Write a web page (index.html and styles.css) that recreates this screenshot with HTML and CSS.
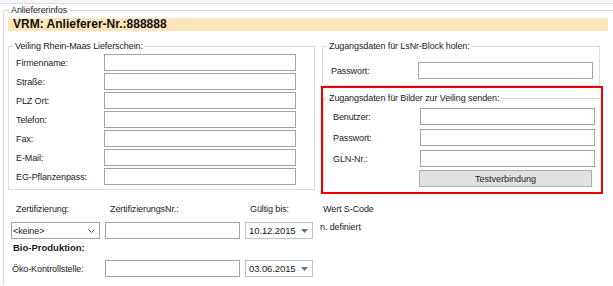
FILE: index.html
```html
<!DOCTYPE html>
<html>
<head>
    <title>Anliefererinfos</title>
    <link rel="stylesheet" href="styles.css">
</head>
<body>
    <div class="topbar"></div>
    <fieldset class="group outer">
        <legend>Anliefererinfos</legend>
        <div class="title-bar">VRM: Anlieferer-Nr.:888888</div>

        <div class="columns">
            <fieldset class="group supplier">
                <legend>Veiling Rhein-Maas Lieferschein:</legend>
                <div class="field"><label>Firmenname:</label><input type="text" class="text"></div>
                <div class="field"><label>Straße:</label><input type="text" class="text"></div>
                <div class="field"><label>PLZ Ort:</label><input type="text" class="text"></div>
                <div class="field"><label>Telefon:</label><input type="text" class="text"></div>
                <div class="field"><label>Fax:</label><input type="text" class="text"></div>
                <div class="field"><label>E-Mail:</label><input type="text" class="text"></div>
                <div class="field"><label>EG-Pflanzenpass:</label><input type="text" class="text"></div>
            </fieldset>

            <div class="access">
                <fieldset class="group lsnr">
                    <legend>Zugangsdaten für LsNr-Block holen:</legend>
                    <div class="field"><label>Passwort:</label><input type="password" class="text"></div>
                </fieldset>

                <div class="highlight">
                    <fieldset class="group images">
                        <legend>Zugangsdaten für Bilder zur Veiling senden:</legend>
                        <div class="field"><label>Benutzer:</label><input type="text" class="text"></div>
                        <div class="field"><label>Passwort:</label><input type="password" class="text"></div>
                        <div class="field"><label>GLN-Nr.:</label><input type="text" class="text"></div>
                        <button class="test-btn">Testverbindung</button>
                    </fieldset>
                </div>
            </div>
        </div>

        <div class="cert-row head">
            <span class="c1">Zertifizierung:</span>
            <span class="c2">ZertifizierungsNr.:</span>
            <span class="c3">Gültig bis:</span>
            <span class="c4">Wert S-Code</span>
        </div>
        <div class="cert-row values">
            <div class="combo">
                <span>&lt;keine&gt;</span>
                <svg width="7" height="4" viewBox="0 0 7 4"><polyline points="0.5,0.5 3.5,3.5 6.5,0.5" fill="none" stroke="#555" stroke-width="1"/></svg>
            </div>
            <input type="text" class="text short">
            <div class="date">
                <span>10.12.2015</span>
                <svg width="7" height="4" viewBox="0 0 7 4"><polygon points="0,0 7,0 3.5,4" fill="#5d7190"/></svg>
            </div>
            <span class="note">n. definiert</span>
        </div>
        <div class="cert-row bio">
            <span class="bio-title">Bio-Produktion:</span>
        </div>
        <div class="cert-row control">
            <span class="c0">Öko-Kontrollstelle:</span>
            <input type="text" class="text short">
            <div class="date">
                <span>03.06.2015</span>
                <svg width="7" height="4" viewBox="0 0 7 4"><polygon points="0,0 7,0 3.5,4" fill="#5d7190"/></svg>
            </div>
        </div>
    </fieldset>
</body>
</html>
```

FILE: styles.css
```css
body {
    margin: 0;
    background-color: white;
    font-family: "Liberation Sans", Arial, sans-serif;
    font-size: 9px;
    letter-spacing: -0.1px;
    color: #1a1a1a;
    overflow: hidden;
}
.topbar {
    height: 3px;
    border-bottom: 1px solid #d8dde3;
    background-color: #f4f5f7;
}
.group {
    margin: 0;
    padding: 0;
    min-width: 0;
    border: 1px solid #dcdcdc;
    box-sizing: border-box;
}
.group legend {
    padding: 0 2px;
    line-height: 11px;
    font-size: 9px;
}
.outer {
    margin: 1px 0 0 3px;
    padding: 0 0 8px 4px;
    border-right: none;
    border-bottom: none;
}
.outer > legend {
    margin-left: 1px;
}
.title-bar {
    margin: 2px 5px 0 0;
    height: 13px;
    line-height: 13px;
    padding-left: 5px;
    background-color: #fde4ba;
    font-size: 12px;
    font-weight: bold;
    letter-spacing: 0;
    color: #111;
}
.columns {
    display: flex;
    align-items: flex-start;
    margin-top: 10px;
}
.field {
    display: flex;
    align-items: center;
    height: 17px;
}
.field label {
    flex: none;
}
input.text {
    box-sizing: border-box;
    height: 17px;
    margin: 0;
    padding: 0 2px;
    border: 1px solid #a3a3a3;
    background-color: white;
    font: inherit;
    outline: none;
}
.supplier {
    width: 307px;
    padding: 2px 0 4px 0;
}
.supplier > legend {
    margin-left: 4px;
}
.supplier .field {
    padding-left: 7px;
}
.supplier .field + .field {
    margin-top: 2px;
}
.supplier label {
    width: 88px;
}
.supplier input.text {
    width: 192px;
}
.access {
    margin-left: 6px;
}
.lsnr {
    width: 278px;
    margin-left: 1px;
    padding: 10px 0 6px 0;
}
.lsnr > legend {
    margin-left: 4px;
}
.lsnr .field {
    padding-left: 8px;
}
.lsnr label {
    width: 87px;
}
.lsnr input.text {
    width: 175px;
}
.highlight {
    width: 282px;
    box-sizing: border-box;
    border: 2px solid #ee0000;
    padding-bottom: 5px;
}
.images {
    margin-top: 5px;
    padding: 4px 0 0 0;
    border-right: none;
    border-bottom: none;
}
.images > legend {
    margin-left: 3px;
}
.images .field {
    padding-left: 9px;
}
.images .field + .field {
    margin-top: 4px;
}
.images label {
    width: 87px;
}
.images input.text {
    width: 175px;
}
.test-btn {
    display: block;
    box-sizing: border-box;
    width: 173px;
    height: 17px;
    margin: 3px 0 0 95px;
    padding: 0;
    border: 1px solid #adadad;
    background-color: #e1e1e1;
    font: inherit;
    color: #1a1a1a;
}
.cert-row {
    display: grid;
    grid-template-columns: 97px 140px 75px 1fr;
    align-items: center;
    height: 17px;
}
.cert-row.head {
    margin-top: 6px;
}
.cert-row.values {
    margin-top: 5px;
}
.cert-row.control {
    margin-top: 4px;
}
.c1 {
    padding-left: 8px;
}
.c2 {
    padding-left: 5px;
}
.c3 {
    padding-left: 5px;
}
.c4 {
    padding-left: 3px;
}
.c0 {
    padding-left: 4px;
}
.combo {
    display: flex;
    align-items: center;
    justify-content: space-between;
    box-sizing: border-box;
    width: 89px;
    height: 17px;
    margin-left: 3px;
    padding: 0 4px 0 1px;
    border: 1px solid #a3a3a3;
}
input.short {
    width: 135px;
}
.date {
    display: flex;
    align-items: center;
    justify-content: space-between;
    box-sizing: border-box;
    width: 68px;
    height: 17px;
    padding: 0 4px 0 3px;
    border: 1px solid #b4c3d6;
    font-size: 9.5px;
}
.note {
    align-self: start;
    line-height: 11px;
}
.bio-title {
    grid-column: 1 / 3;
    padding-left: 5px;
    font-weight: bold;
    font-size: 9.5px;
    letter-spacing: 0;
}
```
